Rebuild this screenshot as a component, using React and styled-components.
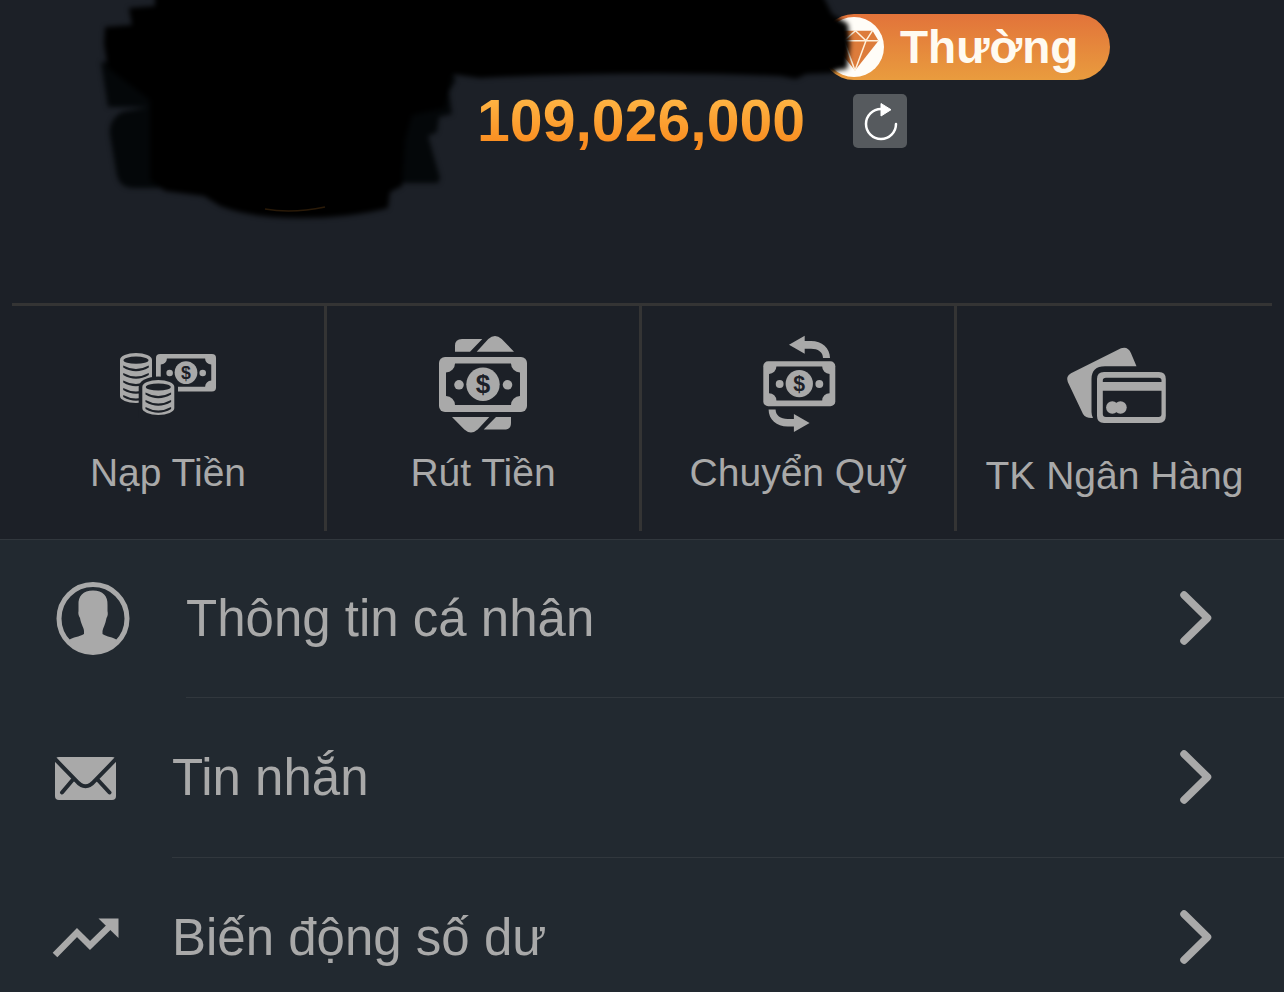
import React, { useState } from "react"
import styled, { createGlobalStyle } from 'styled-components'

const colors = {
  header: '#1c2027',
  list: '#222930',
  grey: '#a9a9a9',
  line: '#343434',
  divider: '#31373d',
}

const GlobalStyle = createGlobalStyle`
  * {
    box-sizing: border-box;
  }

  html {
    scrollbar-width: none;
    background: ${colors.list};
  }

  body {
    margin: 0;
    font-family: "Liberation Sans", Arial, Helvetica, sans-serif;
    color: ${colors.grey};
  }
`

const Page = styled.div`
  min-height: 100vh;
  background: ${colors.list};
`

const Top = styled.header`
  background: ${colors.header};
  border-bottom: 1px solid ${colors.divider};
  padding-bottom: 8px;
`

const Account = styled.section`
  position: relative;
  display: flex;
  flex-direction: column;
  align-items: flex-start;
  gap: 8px;
  padding: 14px 0 149px 477px;
`

const Redaction = styled.svg`
  position: absolute;
  left: 0;
  top: 0;
  pointer-events: none;
`

const Badge = styled.a`
  display: flex;
  align-items: center;
  gap: 16px;
  height: 66px;
  margin-left: 344px;
  padding: 0 32px 0 3px;
  border-radius: 33px;
  background: linear-gradient(#e2733a, #e99c3e);
  color: #fffaf0;
  font-size: 46px;
  font-weight: bold;
  line-height: 64px;
  text-decoration: none;
`

const BalanceRow = styled.div`
  display: flex;
  align-items: center;
  gap: 48px;
`

const Balance = styled.strong`
  font-size: 59px;
  line-height: 66px;
  background: linear-gradient(#ffbe4c, #f98418);
  -webkit-background-clip: text;
  background-clip: text;
  color: transparent;
`

const RefreshButton = styled.button`
  display: flex;
  width: 54px;
  height: 54px;
  padding: 0;
  border: none;
  border-radius: 5px;
  background: #565a5e;
  cursor: pointer;
`

const Actions = styled.nav`
  display: grid;
  grid-template-columns: repeat(4, 1fr);
  margin: 0 12px;
  border-top: 3px solid ${colors.line};
`

const Action = styled.a`
  display: flex;
  flex-direction: column;
  align-items: center;
  gap: ${({ $gap }) => $gap}px;
  height: 225px;
  padding-top: 30px;
  border-right: 3px solid ${colors.line};
  color: ${colors.grey};
  font-size: 39px;
  line-height: 48px;
  white-space: nowrap;
  text-decoration: none;

  &:last-child {
    border-right: none;
  }
`

const ActionIcon = styled.svg`
  display: block;
  width: 96px;
  height: 96px;
  overflow: visible;
  fill: ${colors.grey};
`

const Menu = styled.ul`
  margin: 0;
  padding: 0;
  list-style: none;
`

const MenuLink = styled.a`
  display: flex;
  align-items: center;
  gap: 56px;
  padding-left: 54px;
  color: ${colors.grey};
  font-size: 51px;
  line-height: 60px;
  text-decoration: none;
`

const MenuIcon = styled.svg`
  flex: none;
  overflow: visible;
  fill: ${colors.grey};
`

const MenuBody = styled.span`
  flex: 1;
  display: flex;
  align-items: center;
  justify-content: space-between;
  height: 160px;
  padding-right: 72px;
  border-bottom: 1px solid ${colors.divider};

  li:first-child & {
    height: 158px;
  }
`

// banknote drawn on an 88x55 grid
function Bill({ transform }) {
  return (
    <g transform={transform}>
      <rect width="88" height="55" rx="6" />
      <path
        d="M16 6.5H72A9 9 0 0 0 81 15.5V39A9 9 0 0 0 72 48H16A9 9 0 0 0 7 39V15.5A9 9 0 0 0 16 6.5Z"
        fill={colors.header}
      />
      <circle cx="44" cy="27.3" r="16.7" />
      <circle cx="20" cy="27.8" r="4.8" />
      <circle cx="68.5" cy="27.8" r="4.8" />
      <text x="44" y="36.3" fontSize="26" fontWeight="bold" textAnchor="middle" fill={colors.header}>$</text>
    </g>
  )
}

function DepositIcon() {
  return (
    <ActionIcon viewBox="0 0 96 96" aria-hidden="true">
      <Bill transform="translate(36 18) scale(.682)" />
      <path d="M0 24A16 7 0 0 1 32 24V60A16 7 0 0 1 0 60Z" />
      <g fill={colors.header}>
        <ellipse cx="16" cy="24.2" rx="12.5" ry="3.6" />
        {[30.5, 38, 45.5, 53, 60].map((y) => (
          <path key={y} d={`M3.2 ${y - 1}Q16 ${y + 6} 28.8 ${y - 1}V${y + 1}Q16 ${y + 8.5} 3.2 ${y + 1}Z`} />
        ))}
        <path d="M18.7 51A19.6 10.5 0 0 1 58 51V82H18.7Z" />
      </g>
      <path d="M22.3 51A16 7 0 0 1 54.3 51V72A16 7 0 0 1 22.3 72Z" />
      <g fill={colors.header}>
        <ellipse cx="38.3" cy="51" rx="12.5" ry="3.6" />
        {[57.5, 65, 72].map((y) => (
          <path key={y} d={`M25.5 ${y - 1}Q38.3 ${y + 6} 51.1 ${y - 1}V${y + 1}Q38.3 ${y + 8.5} 25.5 ${y + 1}Z`} />
        ))}
      </g>
    </ActionIcon>
  )
}

function WithdrawIcon() {
  const corner = "M20 15.7V9.7Q20 3 27 3H47.3L35 15.7ZM41.7 15.7L53.3 3Q60 -3 66.7 3L79 15.7Z"
  return (
    <ActionIcon viewBox="0 0 96 96" aria-hidden="true">
      <path d={corner} />
      <path d={corner} transform="rotate(180 48 48.3)" />
      <Bill transform="translate(4 21)" />
    </ActionIcon>
  )
}

function TransferIcon() {
  const arrow = "M39 8.7L54.7 -.3V5H61C72 5 80 12 80 22H73C73 16 68 12.7 61 12.7H54.7V17.7Z"
  return (
    <ActionIcon viewBox="0 0 96 96" aria-hidden="true">
      <path d={arrow} />
      <path d={arrow} transform="rotate(180 49.3 47.8)" />
      <Bill transform="translate(13.3 25.3) scale(.818)" />
    </ActionIcon>
  )
}

function BankIcon() {
  return (
    <ActionIcon viewBox="0 0 96 96" aria-hidden="true">
      <path d="M69.5 30.3L64 17.3Q61 10 54 12.3L4 37.3Q-1.5 40.5 .8 46L16 78Q18.5 82.5 26 82Q24.5 79 24.5 76V43Q24.5 30.3 38 30.3Z" />
      <path
        fillRule="evenodd"
        d="M37 36H92Q98.8 36 98.8 43V80Q98.8 87 92 87H37Q30 87 30 80V43Q30 36 37 36ZM35.8 46H94.5V44.5Q94.5 41.7 91.5 41.7H39Q35.8 41.7 35.8 44.5ZM35.8 54.7V78Q35.8 81 39 81H91.5Q94.5 81 94.5 78V54.7Z"
      />
      <circle cx="45.3" cy="71.5" r="6.2" />
      <circle cx="53.5" cy="71.5" r="6.2" />
    </ActionIcon>
  )
}

function ProfileIcon() {
  return (
    <MenuIcon width="76" height="76" viewBox="0 0 76 76" aria-hidden="true">
      <circle cx="39" cy="37.5" r="34" fill="none" stroke={colors.grey} strokeWidth="5" />
      <path d="M39 9.5C29 9.5 24 15 24.5 24V30C24 32 24.5 35 26 37C27 43 30 47 30 50V53C25 56 19 56 15 59C20 68 29 72.5 39 72.5S58 68 63 59C59 56 53 56 48.5 53V50C49 47 51.5 43 52.5 37C54 35 54 32 53.5 30V24C54 15 49 9.5 39 9.5Z" />
    </MenuIcon>
  )
}

function MessageIcon() {
  return (
    <MenuIcon width="62" height="44" viewBox="0 0 62 44" aria-hidden="true">
      <rect x="1" y="1" width="61" height="43" rx="4" />
      <path
        d="M1 3L22 24.5Q31.5 36 41 24.5L62 3M19 23.5L8 36.5M43.5 23.5L55.5 36.5"
        fill="none"
        stroke={colors.list}
        strokeWidth="4"
        strokeLinecap="round"
      />
    </MenuIcon>
  )
}

function HistoryIcon() {
  return (
    <MenuIcon width="62" height="40" viewBox="0 0 62 40" aria-hidden="true">
      <path d="M1 37L23 14.5L36 27.5L57 7" fill="none" stroke={colors.grey} strokeWidth="6.5" />
      <path d="M44.5 .5H64.500V20Z" />
    </MenuIcon>
  )
}

function Chevron() {
  return (
    <svg width="32" height="56" viewBox="0 0 32 56" aria-hidden="true">
      <path d="M4 4L27.500 27L4 50" fill="none" stroke={colors.grey} strokeWidth="7.500" strokeLinecap="round" strokeLinejoin="round" />
    </svg>
  )
}

function DiamondIcon() {
  return (
    <svg width="60" height="60" viewBox="0 0 60 60" aria-hidden="true">
      <circle cx="30" cy="30" r="30" fill="#fffdf8" />
      <path d="M14 13.700H48.500L54.500 23.700L31 53.500L7 23.700Z" fill="#dd7c3b" />
      <path
        d="M7 23.700H54.500M31 53.500L20 23.700L31.500 13.700L42 23.700L31 53.500M14 13.700L20 23.700M48.500 13.700L42 23.700"
        fill="none"
        stroke="#fff1dc"
        strokeWidth="1.500"
      />
    </svg>
  )
}

const actions = [
  { label: "Nạp Tiền", Icon: DepositIcon, gap: 17 },
  { label: "Rút Tiền", Icon: WithdrawIcon, gap: 17 },
  { label: "Chuyển Quỹ", Icon: TransferIcon, gap: 17 },
  { label: "TK Ngân Hàng", Icon: BankIcon, gap: 20 },
]

const menu = [
  { label: "Thông tin cá nhân", Icon: ProfileIcon },
  { label: "Tin nhắn", Icon: MessageIcon },
  { label: "Biến động số dư", Icon: HistoryIcon },
]

export default function App() {
  const [turns, setTurns] = useState(0)

  return (
    <Page>
      <GlobalStyle />
      <Top>
        <Account>
          <Badge href="#level">
            <DiamondIcon />
            Thường
          </Badge>
          <BalanceRow>
            <Balance>109,026,000</Balance>
            <RefreshButton type="button" aria-label="Refresh balance" onClick={() => setTurns(turns + 1)}>
              <svg width="54" height="54" viewBox="0 0 54 54" style={{ transform: `rotate(${turns * 360}deg)` }}>
                <path d="M43 30A15 15 0 1 1 28 15" fill="none" stroke="#fff" strokeWidth="2.500" strokeLinecap="round" />
                <path d="M28 9.500L38 15.700L28 22Z" fill="#fff" stroke="#fff" strokeLinejoin="round" />
              </svg>
            </RefreshButton>
          </BalanceRow>
          <Redaction width="870" height="230" viewBox="0 0 870 230" aria-hidden="true">
            <defs>
              <filter id="soft" x="-5%" y="-10%" width="110%" height="120%" colorInterpolationFilters="sRGB">
                <feGaussianBlur stdDeviation="2.500" />
              </filter>
            </defs>
            <g filter="url(#soft)">
              <path
                d="M101 62L108 107H150L122 112Q108 120 110 135L117 176Q120 187 132 188H200V60ZM380 60L452 72L456 80L449 92L452 114L439 117L437 132L428 136L440 178L438 183H380Z"
                fill="#040709"
              />
              <path d="M155 -10V6L129 8L132 25L105 27L104 44L108 68L150 100V180L165 191L204 196L220 206Q250 218 300 218Q350 218 388 208L390 192L402 186L405 140L412 115L445 108L452 74L480 78Q640 70 780 76L796 79L806 74L832 73L838 70L847 69L850 45L848 24L832 14L820 -10Z" />
            </g>
            <path d="M265 209Q292 214 325 207" fill="none" stroke="#2a1a08" strokeWidth="1.500" />
          </Redaction>
        </Account>
        <Actions>
          {actions.map(({ label, Icon, gap }) => (
            <Action key={label} href="#action" $gap={gap}>
              <Icon />
              {label}
            </Action>
          ))}
        </Actions>
      </Top>
      <Menu>
        {menu.map(({ label, Icon }) => (
          <li key={label}>
            <MenuLink href="#menu">
              <Icon />
              <MenuBody>
                {label}
                <Chevron />
              </MenuBody>
            </MenuLink>
          </li>
        ))}
      </Menu>
    </Page>
  )
}
